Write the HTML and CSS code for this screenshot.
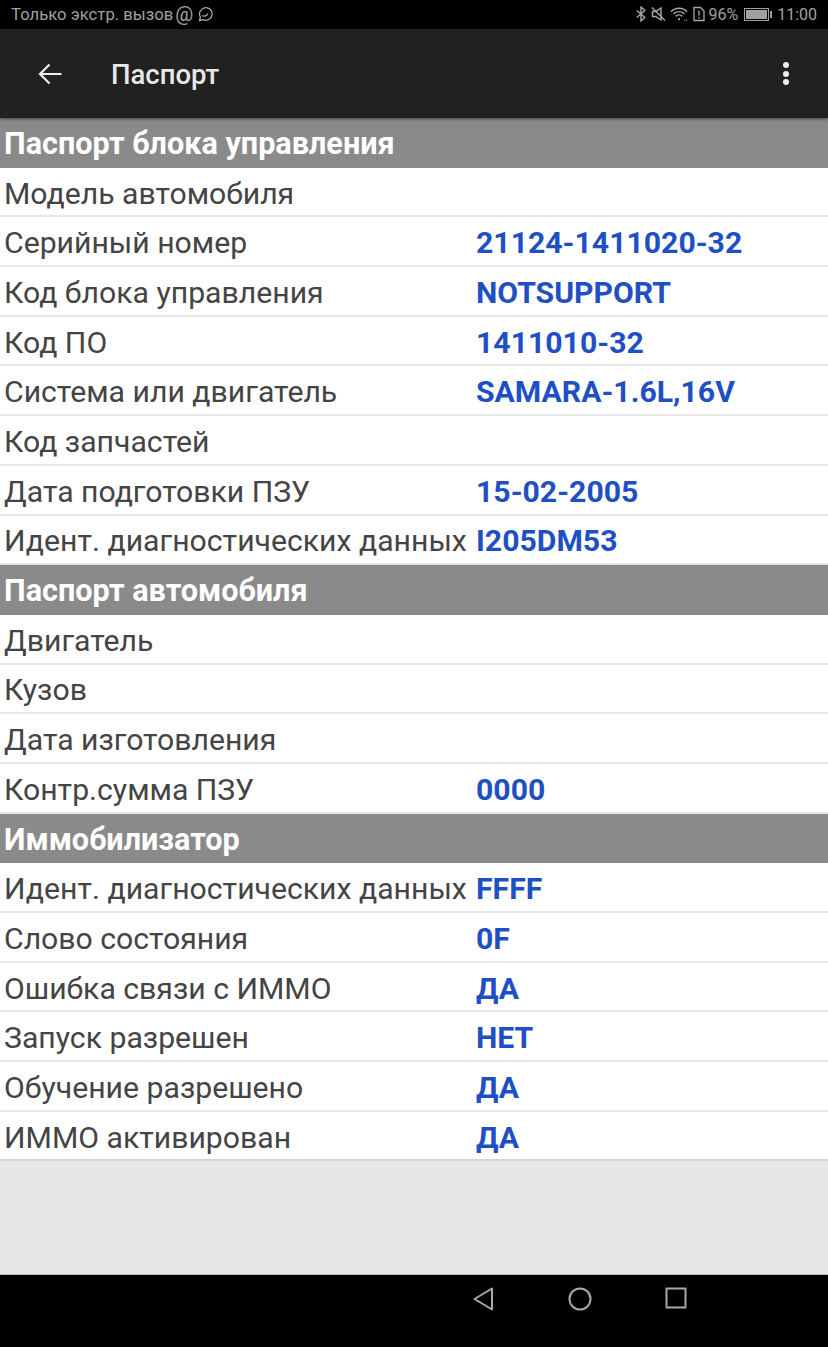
FILE: index.html
```html
<!DOCTYPE html>
<html lang="ru">
  <head>
    <meta charset="UTF-8" />
    <meta name="viewport" content="width=device-width, initial-scale=1.0" />
    <title>Паспорт</title>
    <link rel="stylesheet" href="styles.css">
  </head>
  <body>
    <!-- Status bar -->
    <div class="status-bar">
      <div class="status-left">
        <span>Только экстр. вызов</span>
        <span class="status-at">@</span>
        <svg class="icon-msg" width="16" height="16" viewBox="0 0 16 16" fill="none" stroke="#a8a8a8" stroke-width="1.3">
          <path d="M2.500 14.500l.9-3.300A6.300 6.300 0 1 1 6 13.600z" />
          <path d="M5 9.500c1.500 1 4.500 1 6-2" />
        </svg>
      </div>
      <div class="status-right">
        <svg class="icon-bt" width="10" height="16" viewBox="0 0 10 16" fill="none" stroke="#a8a8a8" stroke-width="1.4">
          <path d="M.8 4.500l8 7L5 15V1l3.800 3.500-8 7" />
        </svg>
        <svg class="icon-mute" width="15" height="16" viewBox="0 0 15 16" fill="none" stroke="#a8a8a8" stroke-width="1.4">
          <path d="M1.500 5.500h3L10 2v12l-5.500-3.500h-3z" />
          <path d="M1 1.500l13 13" />
        </svg>
        <svg class="icon-wifi" width="18" height="16" viewBox="0 0 19 16" fill="none" stroke="#a8a8a8" stroke-width="1.5">
          <path d="M1 5.500a12 12 0 0 1 17 0" />
          <path d="M3.500 8a8.500 8.500 0 0 1 12 0" />
          <path d="M6 10.500a5 5 0 0 1 7 0" />
          <circle cx="9.500" cy="13.500" r="1.200" fill="#a8a8a8" stroke="none" />
          <path d="M15 14.500h3" stroke-dasharray="1 1" />
        </svg>
        <svg class="icon-sim" width="12" height="16" viewBox="0 0 12 16" fill="none" stroke="#a8a8a8" stroke-width="1.300">
          <path d="M1 1.500h6.500L11 5v9.500H1z" />
          <path d="M6 4.500v5M6 11v1.500" />
        </svg>
        <span class="status-pct">96%</span>
        <div class="battery">
          <div class="battery-body"><div class="battery-fill"></div></div>
          <div class="battery-tip"></div>
        </div>
        <span class="status-time">11:00</span>
      </div>
    </div>

    <!-- Toolbar -->
    <div class="toolbar">
      <svg class="back" width="24" height="24" viewBox="0 0 24 24" fill="none" stroke="#eeeeee" stroke-width="2.2">
        <path d="M23.500 12H2M11.500 2.500L2 12l9.500 9.500" />
      </svg>
      <span class="toolbar-title">Паспорт</span>
      <div class="more">
        <span class="dot"></span>
        <span class="dot"></span>
        <span class="dot"></span>
      </div>
    </div>

    <!-- Passport table -->
    <div class="content">
      <div class="section">Паспорт блока управления</div>
      <div class="row"><span class="label">Модель автомобиля</span><span class="value"></span></div>
      <div class="row"><span class="label">Серийный номер</span><span class="value">21124-1411020-32</span></div>
      <div class="row"><span class="label">Код блока управления</span><span class="value">NOTSUPPORT</span></div>
      <div class="row"><span class="label">Код ПО</span><span class="value">1411010-32</span></div>
      <div class="row"><span class="label">Система или двигатель</span><span class="value">SAMARA-1.6L,16V</span></div>
      <div class="row"><span class="label">Код запчастей</span><span class="value"></span></div>
      <div class="row"><span class="label">Дата подготовки ПЗУ</span><span class="value">15-02-2005</span></div>
      <div class="row"><span class="label">Идент. диагностических данных</span><span class="value">I205DM53</span></div>

      <div class="section">Паспорт автомобиля</div>
      <div class="row"><span class="label">Двигатель</span><span class="value"></span></div>
      <div class="row"><span class="label">Кузов</span><span class="value"></span></div>
      <div class="row"><span class="label">Дата изготовления</span><span class="value"></span></div>
      <div class="row"><span class="label">Контр.сумма ПЗУ</span><span class="value">0000</span></div>

      <div class="section">Иммобилизатор</div>
      <div class="row"><span class="label">Идент. диагностических данных</span><span class="value">FFFF</span></div>
      <div class="row"><span class="label">Слово состояния</span><span class="value">0F</span></div>
      <div class="row"><span class="label">Ошибка связи с ИММО</span><span class="value">ДА</span></div>
      <div class="row"><span class="label">Запуск разрешен</span><span class="value">НЕТ</span></div>
      <div class="row"><span class="label">Обучение разрешено</span><span class="value">ДА</span></div>
      <div class="row row-last"><span class="label">ИММО активирован</span><span class="value">ДА</span></div>
    </div>

    <!-- Navigation bar -->
    <div class="nav-bar">
      <svg width="24" height="26" viewBox="0 0 24 26" fill="none" stroke="#a8a8a8" stroke-width="2" stroke-linejoin="round">
        <path d="M20 2.500v21L2.500 13z" />
      </svg>
      <svg width="26" height="26" viewBox="0 0 26 26" fill="none" stroke="#a8a8a8" stroke-width="2">
        <circle cx="13" cy="13" r="10.500" />
      </svg>
      <svg width="24" height="24" viewBox="0 0 24 24" fill="none" stroke="#a8a8a8" stroke-width="2" stroke-linejoin="round">
        <rect x="2.500" y="2.500" width="19" height="19" />
      </svg>
    </div>
  </body>
</html>
```

FILE: styles.css
```css
html, body {
  margin: 0;
  padding: 0;
}
body {
  width: 828px;
  height: 1347px;
  display: flex;
  flex-direction: column;
  background-color: #e7e7e7;
  font-family: Roboto, "Liberation Sans", sans-serif;
  overflow: hidden;
}
.status-bar {
  height: 29px;
  flex-shrink: 0;
  background-color: #000;
  color: #a0a0a0;
  font-size: 16.7px;
  display: flex;
  justify-content: space-between;
  align-items: center;
  padding: 0 11px 1px 11px;
  box-sizing: border-box;
}
.status-left,
.status-right {
  display: flex;
  align-items: center;
}
.status-right {
  font-size: 16px;
}
.status-at {
  margin-left: 2px;
  font-size: 20px;
  line-height: 20px;
}
.icon-msg {
  margin-left: 4px;
}
.icon-bt {
  margin-right: 5px;
}
.icon-mute {
  margin-right: 4px;
}
.icon-wifi {
  margin-right: 5px;
}
.icon-sim {
  margin-right: 3px;
}
.status-pct {
  margin-right: 6px;
}
.battery {
  display: flex;
  align-items: center;
  margin-right: 5px;
}
.battery-body {
  width: 25px;
  height: 13px;
  border: 1px solid #a0a0a0;
  box-sizing: border-box;
  padding: 1px;
}
.battery-fill {
  height: 100%;
  background-color: #a0a0a0;
}
.battery-tip {
  width: 2px;
  height: 7px;
  margin-left: 1px;
  background-color: #a0a0a0;
}
.toolbar {
  height: 89px;
  flex-shrink: 0;
  background-color: #212121;
  display: flex;
  align-items: center;
  padding: 0 39px 0 38px;
  box-sizing: border-box;
  position: relative;
  box-shadow: 0 1px 3px rgba(0, 0, 0, 0.5);
}
.toolbar-title {
  margin-left: 49px;
  padding-top: 2px;
  color: #e8e8e8;
  font-size: 27.5px;
  font-weight: 500;
  flex-grow: 1;
}
.more {
  display: flex;
  flex-direction: column;
  gap: 2.5px;
}
.dot {
  width: 6px;
  height: 6px;
  border-radius: 50%;
  background-color: #eee;
}
.content {
  height: 1156px;
  flex-shrink: 0;
}
.section {
  height: 49.7px;
  line-height: 49.7px;
  box-sizing: border-box;
  padding: 1px 0 0 4px;
  background-color: #8a8a8a;
  color: #fff;
  font-size: 30.6px;
  font-weight: bold;
}
.row {
  height: 49.7px;
  box-sizing: border-box;
  display: flex;
  align-items: center;
  background-color: #fff;
  border-bottom: 2px solid #e6e6e6;
  padding: 3px 0 0 4px;
  font-size: 30.2px;
}
.row-last {
  border-bottom-color: #d4d4d4;
}
.label {
  width: 472px;
  flex-shrink: 0;
  color: #444;
}
.value {
  color: #1e50c4;
  font-weight: bold;
}
.nav-bar {
  flex-grow: 1;
  background-color: #000;
  border-top: 1px solid #bbb;
  box-sizing: border-box;
  padding: 11px 140px 0 472px;
  display: flex;
  justify-content: space-between;
  align-items: flex-start;
}
```
